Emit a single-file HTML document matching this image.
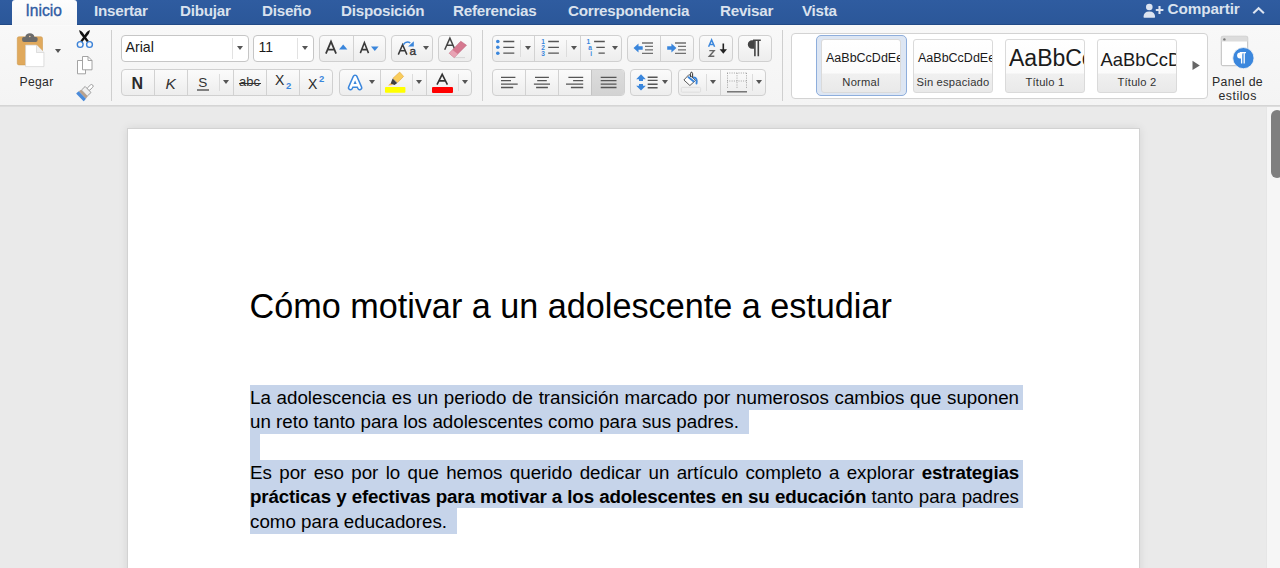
<!DOCTYPE html>
<html><head><meta charset="utf-8">
<style>
*{margin:0;padding:0;box-sizing:border-box}
html,body{width:1280px;height:568px;overflow:hidden;background:#eaeaea;font-family:"Liberation Sans",sans-serif;position:relative}
.a{position:absolute}
#tabbar{left:0;top:0;width:1280px;height:25px;background:linear-gradient(#2f5ca0,#2b5799);border-bottom:1px solid #224a86}
.tab{position:absolute;top:2px;font-size:15.2px;letter-spacing:-0.25px;font-weight:bold;color:#dae2ee;white-space:nowrap;line-height:18px}
#inicio{left:12px;top:0;width:65px;height:27px;background:linear-gradient(#fdfdfd,#f6f6f6);border-radius:3px 3px 0 0}
#inicio span{position:absolute;left:13.5px;top:1.5px;font-size:15.6px;letter-spacing:0px;font-weight:normal;color:#2f5ba3;line-height:18px;-webkit-text-stroke:0.35px #2f5ba3}
#ribbon{left:0;top:25px;width:1280px;height:81px;background:linear-gradient(#f8f8f8,#f4f4f4);border-top:1px solid #fafafa;border-bottom:1px solid #d5d5d5;box-shadow:0 1px 0 #dddddd}
.vsep{position:absolute;width:1px;background:#cfcfcf}
.btn{position:absolute;border:1px solid #d0d0d0;border-radius:4px;background:linear-gradient(#fbfbfb,#ededed)}
.div{position:absolute;top:0;bottom:0;width:1px;background:#d2d2d2}
.isep{position:absolute;top:4px;bottom:4px;width:1px;background:#dcdcdc}
.dd{position:absolute;width:0;height:0;border-left:4px solid transparent;border-right:4px solid transparent;border-top:5px solid #555}
.lbl{position:absolute;font-size:12px;color:#2a2a2a;white-space:nowrap;line-height:14px}
#canvas{left:0;top:107px;width:1280px;height:461px;background:#eaeaea}
#page{left:127px;top:128px;width:1013px;height:460px;background:#fff;border:1px solid #d2d2d2;box-shadow:0 0 9px rgba(0,0,0,0.09)}
#track{left:1266px;top:107px;width:14px;height:461px;background:#f6f6f6;border-left:1px solid #e6e6e6}
#thumb{left:1270.5px;top:110px;width:12px;height:68px;background:#7f7f7f;border-radius:6px}
.hl{position:absolute;background:#c6d4ea}
.line{position:absolute;left:250px;width:769px;font-size:18.75px;color:#000;white-space:nowrap;line-height:22px}
.j{text-align:justify;text-align-last:justify;white-space:normal}
.card{position:absolute;top:39px;width:80px;height:54px;border:1px solid #dadada;border-radius:3px;background:linear-gradient(#fff 0,#fbfbfb 33px,#f0f0f0 34px,#e9e9e9 100%);overflow:hidden}
.smp{position:absolute;left:4px;white-space:nowrap;color:#1a1a1a;line-height:1.15}
.cl{position:absolute;left:0;width:100%;top:36px;text-align:center;font-size:11.2px;letter-spacing:0.2px;color:#333;line-height:13px}
b{letter-spacing:-0.16px}
</style></head><body>
<div id="tabbar" class="a"></div>
<div id="inicio" class="a"><span>Inicio</span></div>
<div class="tab" style="left:94px">Insertar</div>
<div class="tab" style="left:180px">Dibujar</div>
<div class="tab" style="left:262px">Diseño</div>
<div class="tab" style="left:341px">Disposición</div>
<div class="tab" style="left:453px">Referencias</div>
<div class="tab" style="left:568px">Correspondencia</div>
<div class="tab" style="left:720px">Revisar</div>
<div class="tab" style="left:802px">Vista</div>
<div class="tab" style="left:1167.5px;font-size:15.3px;letter-spacing:-0.1px;top:-0.5px">Compartir</div>

<div id="ribbon" class="a"></div>

<!-- ===== RIBBON ===== -->
<!-- clipboard -->
<svg class="a" style="left:14px;top:30px" width="34" height="40" viewBox="0 0 34 40">
  <rect x="3.3" y="6.8" width="25.2" height="28.1" rx="1.6" fill="#e0a95c" stroke="#cf9a4f" stroke-width="0.6"/>
  <path d="M11.3 6.9 a4.6 4.2 0 0 1 9.1 0 h1.6 a1.6 1.6 0 0 1 1.6 1.6 v1.6 a2 2 0 0 1 -2 2 h-11.5 a2 2 0 0 1 -2 -2 v-1.6 a1.6 1.6 0 0 1 1.6 -1.6z" fill="#6b6b6b"/>
  <circle cx="15.8" cy="6.5" r="0.8" fill="#f3cfa8"/>
  <path d="M11.6 15.1 h10.9 l7.4 7.4 v14.1 h-18.3z" fill="#fff" stroke="#d2d2d2" stroke-width="0.7"/>
  <path d="M22.5 15.1 v7.4 h7.4" fill="#f0f0f0" stroke="#d2d2d2" stroke-width="0.7"/>
</svg>
<div class="dd" style="left:55px;top:49px;border-left-width:3px;border-right-width:3px;border-top-width:4px"></div>
<div class="lbl" style="left:19.5px;top:74.5px;font-size:12.2px;letter-spacing:0.3px;color:#2a2a2a">Pegar</div>
<!-- scissors -->
<svg class="a" style="left:74px;top:28px" width="22" height="22" viewBox="0 0 22 22">
  <path d="M5.2 2 Q7.8 3.3 8.7 4.6 L14.8 13 L13 14.3 L6.4 5.9 Q5.3 4.2 5.2 2z" fill="#111"/>
  <path d="M15.9 2 Q13.3 3.3 12.4 4.6 L6.3 13 L8.1 14.3 L14.7 5.9 Q15.8 4.2 15.9 2z" fill="#111"/>
  <circle cx="6.2" cy="16.5" r="2.9" fill="none" stroke="#3b82d8" stroke-width="1.4"/>
  <circle cx="15.5" cy="16.5" r="2.9" fill="none" stroke="#3b82d8" stroke-width="1.4"/>
</svg>
<!-- copy -->
<svg class="a" style="left:74px;top:54px" width="22" height="22" viewBox="0 0 22 22">
  <path d="M3.5 6.5 h8 v13.3 h-8z" fill="#fff" stroke="#9a9a9a" stroke-width="0.9"/>
  <path d="M8.5 2.5 h5.5 l4 4 v9.3 h-9.5z" fill="#fff" stroke="#9a9a9a" stroke-width="0.9"/>
  <path d="M14 2.5 v4 h4" fill="none" stroke="#9a9a9a" stroke-width="0.9"/>
</svg>
<!-- brush -->
<svg class="a" style="left:73.5px;top:79.5px" width="24" height="22" viewBox="0 0 24 22">
  <g transform="rotate(46 12 11.5)">
    <rect x="10.4" y="2.2" width="3.2" height="7" rx="1.6" fill="#fff" stroke="#8d8d8d" stroke-width="0.8"/>
    <path d="M7.8 8.6 h8.4 v5.2 h-8.4z" fill="#efefef" stroke="#8d8d8d" stroke-width="0.8"/>
    <path d="M7.4 13.8 h9.2 l0.6 2.8 h-10.4z" fill="#b9a18c"/>
    <path d="M6.8 16.6 h10.4 l0.3 2.6 q0.1 0.9 -0.8 0.9 h-9.4 q-0.9 0 -0.8 -0.9z" fill="#4a8ad9"/>
  </g>
</svg>
<div class="vsep" style="left:111px;top:30px;height:71px"></div>

<!-- font name / size -->
<div class="a" style="left:121px;top:35px;width:128px;height:27px;background:#fff;border:1px solid #c6c6c6;border-radius:4px"></div>
<div class="a" style="left:232px;top:38px;width:1px;height:21px;background:#e2e2e2"></div>
<div class="dd" style="left:237px;top:46px;border-left-width:3px;border-right-width:3px;border-top-width:4px"></div>
<div class="lbl" style="left:125.5px;top:40px;font-size:14.2px;color:#1a1a1a;line-height:15px">Arial</div>
<div class="a" style="left:253px;top:35px;width:61px;height:27px;background:#fff;border:1px solid #c6c6c6;border-radius:4px"></div>
<div class="a" style="left:297px;top:38px;width:1px;height:21px;background:#e2e2e2"></div>
<div class="dd" style="left:302px;top:46px;border-left-width:3px;border-right-width:3px;border-top-width:4px"></div>
<div class="lbl" style="left:258.5px;top:40px;font-size:14px;color:#1a1a1a;line-height:15px">11</div>

<!-- grow/shrink -->
<div class="btn" style="left:319px;top:35px;width:67px;height:27px"><div class="div" style="left:32.5px"></div></div>
<svg class="a" style="left:319px;top:35px" width="66" height="27"><path d="M6.9 18.6 L12 6.6 L17.1 18.6 M8.6 14.5 H15.4" fill="none" stroke="#393939" stroke-width="1.75"/><path d="M41.3 18.1 L45.4 7.7 L49.5 18.1 M42.7 14.6 H48.1" fill="none" stroke="#393939" stroke-width="1.55"/></svg>
<svg class="a" style="left:339px;top:44px" width="9" height="6"><path d="M0 5.5 L4.2 0.5 L8.4 5.5z" fill="#3a86dc"/></svg>

<svg class="a" style="left:371px;top:46px" width="9" height="6"><path d="M0 0.5 L7.6 0.5 L3.8 5z" fill="#3a86dc"/></svg>
<!-- change case -->
<div class="btn" style="left:391px;top:35px;width:42px;height:27px"></div>
<svg class="a" style="left:391px;top:35px" width="42" height="27" viewBox="0 0 42 27">
  <path d="M7.3 19.6 L11.6 9.6 L15.9 19.6 M9 15.8 H14.2" fill="none" stroke="#3a3a3a" stroke-width="1.5"/>
  <text x="18.4" y="19.7" font-family="Liberation Sans" font-size="11.8" fill="#333" stroke="#333" stroke-width="0.35">a</text>
  <path d="M12.2 9.8 Q15.2 5.6 19.3 7.9" fill="none" stroke="#3a86dc" stroke-width="1.5"/>
  <path d="M17.1 11.4 L22.8 11.4 L22.8 6.2z" fill="#3a86dc"/>
</svg>
<div class="dd" style="left:422.5px;top:46px;border-left-width:3px;border-right-width:3px;border-top-width:4px"></div>
<!-- clear formatting -->
<div class="btn" style="left:438px;top:35px;width:34px;height:27px"></div>
<svg class="a" style="left:438px;top:35px" width="34" height="27" viewBox="0 0 34 27">
  <path d="M6.7 14.7 L11.9 3.1 L17 14.7 M8.5 10.3 H15.5" fill="none" stroke="#444" stroke-width="1.5"/>
  <path d="M16 22.6 H27" stroke="#d6d6d6" stroke-width="1"/>
  <path d="M22.8 6.2 L28.5 10.2 L16.2 22.6 L11.2 18.3z" fill="#d5788f" stroke="#b85a73" stroke-width="0.5"/>
  <path d="M14.6 14.9 L19.8 19 L16.2 22.6 L11.2 18.3z" fill="#e8a3b4"/>
</svg>

<!-- B I U group -->
<div class="btn" style="left:121px;top:69px;width:212px;height:27px">
  <div class="div" style="left:32px"></div><div class="div" style="left:65px"></div>
  <div class="isep" style="left:97px"></div><div class="div" style="left:111px"></div>
  <div class="div" style="left:144px"></div><div class="div" style="left:177px"></div>
</div>
<div class="lbl" style="left:131.5px;top:74.5px;font-size:16px;font-weight:bold;color:#2a2a2a;line-height:18px">N</div>
<div class="lbl" style="left:165.5px;top:74.5px;font-size:15.5px;font-style:italic;color:#333;line-height:18px">K</div>
<div class="lbl" style="left:198.3px;top:75.3px;font-size:13.6px;color:#333;line-height:16px">S</div>
<div class="a" style="left:197px;top:89.3px;width:11.5px;height:1.3px;background:#808080"></div>
<div class="dd" style="left:223px;top:80px;border-left-width:3px;border-right-width:3px;border-top-width:4px"></div>
<div class="lbl" style="left:239px;top:74px;font-size:13px;color:#333;line-height:15px">abc</div>
<div class="a" style="left:239px;top:82.5px;width:22px;height:1.2px;background:#333"></div>
<div class="lbl" style="left:275px;top:72.3px;font-size:14px;color:#2a2a2a;line-height:16px">X</div>
<div class="lbl" style="left:286px;top:80px;font-size:9.5px;font-weight:bold;color:#3a86dc;line-height:11px">2</div>
<div class="lbl" style="left:308px;top:76.2px;font-size:14px;color:#2a2a2a;line-height:16px">X</div>
<div class="lbl" style="left:319px;top:73px;font-size:9.5px;font-weight:bold;color:#3a86dc;line-height:11px">2</div>

<!-- effects / highlight / color -->
<div class="btn" style="left:339px;top:69px;width:133px;height:27px">
  <div class="div" style="left:39.5px"></div><div class="isep" style="left:71.5px"></div>
  <div class="div" style="left:85.5px"></div><div class="isep" style="left:117.5px"></div>
</div>
<svg class="a" style="left:343px;top:70px" width="24" height="24" viewBox="0 0 24 24">
  <path d="M7.5 17.7 L12.1 7.2 L16.7 17.7 M9 15.2 H15.2" fill="none" stroke="#3a86dc" stroke-width="5.4" stroke-linejoin="round" stroke-linecap="round"/>
  <path d="M7.5 17.7 L12.1 7.2 L16.7 17.7 M9 15.2 H15.2" fill="none" stroke="#fff" stroke-width="2.5" stroke-linejoin="round" stroke-linecap="round"/>
</svg>
<div class="dd" style="left:368.5px;top:80px;border-left-width:3px;border-right-width:3px;border-top-width:4px"></div>
<svg class="a" style="left:343px;top:70px" width="66" height="24" viewBox="0 0 66 24">
  <path d="M50 8.2 L56.7 2.1 L60.6 6.4 L54.6 12.6z" fill="#f9cd5c" stroke="#e0a63c" stroke-width="0.6"/>
  <path d="M49.6 8.6 L54.2 13 L51.6 15 L47.6 13.8z" fill="#3f3f3f"/>
  <path d="M45 15.6 L47.5 13.2 L50.2 15z" fill="#f1b24a"/>
  <rect x="42" y="17" width="20.4" height="5.7" rx="0.8" fill="#ffff00"/>
</svg>
<div class="dd" style="left:415.5px;top:80px;border-left-width:3px;border-right-width:3px;border-top-width:4px"></div>
<svg class="a" style="left:430px;top:70px" width="24" height="18"><path d="M7 14.6 L12.2 4.3 L17.4 14.6 M8.9 10.9 H15.5" fill="none" stroke="#333" stroke-width="1.6"/></svg>
<div class="a" style="left:432px;top:87px;width:20.5px;height:5.7px;background:#ff0000;border-radius:1px"></div>
<div class="dd" style="left:461.5px;top:80px;border-left-width:3px;border-right-width:3px;border-top-width:4px"></div>

<div class="vsep" style="left:482px;top:30px;height:71px"></div>

<!-- lists -->
<div class="btn" style="left:492px;top:35px;width:130px;height:27px">
  <div class="div" style="left:41px"></div><div class="div" style="left:87px"></div>
  <div class="isep" style="left:27px"></div><div class="isep" style="left:73px"></div>
</div>
<svg class="a" style="left:494px;top:38px" width="26" height="20">
  <circle cx="3.8" cy="3.5" r="1.8" fill="#3a86dc"/><circle cx="3.8" cy="9.3" r="1.8" fill="#3a86dc"/><circle cx="3.8" cy="15.2" r="1.8" fill="#3a86dc"/>
  <path d="M9.3 3.5 h11 M9.3 9.3 h11 M9.3 15.2 h11" stroke="#555" stroke-width="1.3"/>
</svg>
<div class="dd" style="left:524.5px;top:46px;border-left-width:3px;border-right-width:3px;border-top-width:4px"></div>
<div class="lbl" style="left:541.3px;top:38.5px;font-size:6.6px;font-weight:bold;color:#3a86dc;line-height:6.1px">1<br>2<br>3</div>
<svg class="a" style="left:546px;top:38px" width="16" height="20"><path d="M2.2 3.5 h10.7 M2.2 9.3 h10.7 M2.2 15.2 h10.7" stroke="#555" stroke-width="1.3"/></svg>
<div class="dd" style="left:570.5px;top:46px;border-left-width:3px;border-right-width:3px;border-top-width:4px"></div>
<div class="lbl" style="left:586.5px;top:38.5px;font-size:6.6px;font-weight:bold;color:#3a86dc;line-height:6.1px">1<br>&nbsp;a<br>&nbsp;&nbsp;i</div>
<svg class="a" style="left:592px;top:38px" width="16" height="20"><path d="M2.1 3.5 h10.7 M4.3 9.3 h8.5 M6.5 15.2 h6.3" stroke="#555" stroke-width="1.3"/></svg>
<div class="dd" style="left:612px;top:46px;border-left-width:3px;border-right-width:3px;border-top-width:4px"></div>

<!-- indent -->
<div class="btn" style="left:627px;top:35px;width:67px;height:27px"><div class="div" style="left:32px"></div></div>
<svg class="a" style="left:632px;top:40px" width="24" height="16">
  <path d="M1.5 8 L6.5 3.5 V6.3 H10.7 V9.7 H6.5 V12.5z" fill="#3a86dc"/>
  <path d="M10 3 h11 M13 6.4 h8 M13 9.9 h8 M10 13.4 h11" stroke="#707070" stroke-width="1.3"/>
</svg>
<svg class="a" style="left:665px;top:40px" width="24" height="16">
  <path d="M11.4 8 L6.4 3.5 V6.3 H2.2 V9.7 H6.4 V12.5z" fill="#3a86dc"/>
  <path d="M10 3 h11 M13 6.4 h8 M13 9.9 h8 M10 13.4 h11" stroke="#707070" stroke-width="1.3"/>
</svg>
<!-- sort -->
<div class="btn" style="left:699px;top:35px;width:34px;height:27px"></div>
<svg class="a" style="left:699px;top:35px" width="34" height="27"><path d="M9.6 11.7 L12.6 4.9 L15.6 11.7 M10.6 9.4 H14.6" fill="none" stroke="#3a86dc" stroke-width="1.45"/><path d="M10.3 15.6 H15.1 L10.3 21.2 H15.3" fill="none" stroke="#666" stroke-width="1.45"/></svg>

<svg class="a" style="left:719px;top:43px" width="9" height="12"><path d="M4.3 0.5 V8" stroke="#222" stroke-width="1.6"/><path d="M0.6 6.3 L4.3 10.8 L8 6.3z" fill="#222"/></svg>
<!-- pilcrow -->
<div class="btn" style="left:738px;top:35px;width:34px;height:27px"></div>
<svg class="a" style="left:746px;top:39px" width="16" height="19" viewBox="0 0 16 19">
  <path d="M9.5 1.3 H6 A4.2 4.2 0 0 0 6 9.7 H8.2 V1.3z" fill="#444"/>
  <path d="M8.9 1.3 V17.2 M12.3 1.3 V17.2 M7 1.3 H14.8" stroke="#444" stroke-width="1.6"/>
</svg>

<!-- align -->
<div class="btn" style="left:492px;top:69px;width:133px;height:27px;overflow:hidden">
  <div class="a" style="left:98px;top:0;width:34px;height:27px;background:linear-gradient(#dcdcdc,#d2d2d2)"></div>
  <div class="div" style="left:32px"></div><div class="div" style="left:65px"></div><div class="div" style="left:98px;background:#c4c4c4"></div>
</div>
<svg class="a" style="left:499px;top:75px" width="20" height="14"><path d="M2 2.3 h14.4 M2 5.6 h10 M2 9.2 h16.7 M2 12.5 h12.2" stroke="#555" stroke-width="1.3"/></svg>
<svg class="a" style="left:532px;top:75px" width="20" height="14"><path d="M3 2.3 h13.9 M5.2 5.6 h9.6 M1.9 9.2 h16.1 M4.1 12.5 h11.8" stroke="#555" stroke-width="1.3"/></svg>
<svg class="a" style="left:565px;top:75px" width="20" height="14"><path d="M3.4 2.3 h14.8 M8.1 5.6 h10.1 M1 9.2 h17.2 M5.9 12.5 h12.3" stroke="#555" stroke-width="1.3"/></svg>
<svg class="a" style="left:599px;top:75px" width="20" height="14"><path d="M1.7 2.3 h15.8 M1.7 5.6 h15.8 M1.7 9.2 h15.8 M1.7 12.5 h15.8" stroke="#555" stroke-width="1.3"/></svg>

<!-- line spacing -->
<div class="btn" style="left:630px;top:69px;width:42px;height:27px"></div>
<svg class="a" style="left:634px;top:72px" width="26" height="22">
  <path d="M7 2.3 L11.8 7.2 H9 V9 H5 V7.2 H2.2z" fill="#3a86dc"/>
  <path d="M7 18.6 L11.8 13.7 H9 V11.9 H5 V13.7 H2.2z" fill="#3a86dc"/>
  <path d="M13.7 5.2 h9.9 M13.7 8.4 h9.9 M13.7 12.3 h9.9 M13.7 15.7 h9.9" stroke="#555" stroke-width="1.4"/>
</svg>
<div class="dd" style="left:662px;top:80px;border-left-width:3px;border-right-width:3px;border-top-width:4px"></div>

<!-- shading / borders -->
<div class="btn" style="left:678px;top:69px;width:88px;height:27px">
  <div class="div" style="left:41px"></div><div class="isep" style="left:27px"></div><div class="isep" style="left:73px"></div>
</div>
<svg class="a" style="left:678px;top:69px" width="26" height="26" viewBox="0 0 26 26">
  <path d="M5.9 11 L11 5.5 L17.6 11.4 L11.9 16.5z" fill="#fff" stroke="#4a4a4a" stroke-width="0.9"/>
  <path d="M10 7.7 L16.1 12.8" stroke="#3a86dc" stroke-width="2"/>
  <path d="M12.7 8 Q12.1 3 13.6 3 Q15 3 14.7 8.6" fill="none" stroke="#333" stroke-width="1"/>
  <path d="M15.8 8.5 Q19.6 8.6 18.5 14.5" fill="none" stroke="#3a86dc" stroke-width="1.9" stroke-linecap="round"/>
  <rect x="3.3" y="18.4" width="19.3" height="4.8" rx="1" fill="none" stroke="#dcdcdc" stroke-width="0.9"/>
</svg>
<div class="dd" style="left:710px;top:80px;border-left-width:3px;border-right-width:3px;border-top-width:4px"></div>
<svg class="a" style="left:725px;top:71px" width="24" height="23">
  <path d="M2.5 2 V18 M12 2 V18 M21.5 2 V18 M2 2 H22 M2 10 H22" stroke="#9a9a9a" stroke-width="0.9" stroke-dasharray="1 1.3"/>
  <path d="M2 20.8 H22" stroke="#6a6a6a" stroke-width="1.4"/>
</svg>
<div class="dd" style="left:756px;top:80px;border-left-width:3px;border-right-width:3px;border-top-width:4px"></div>

<div class="vsep" style="left:782px;top:30px;height:71px"></div>

<!-- styles gallery -->
<div class="a" style="left:791px;top:33px;width:417px;height:66px;background:#fff;border:1px solid #d3d3d3;border-radius:4px"></div>
<div class="a" style="left:816px;top:35px;width:91px;height:61px;background:#dde6f3;border:1px solid #8eaedc;border-radius:5px"></div>
<div class="card" style="left:821px"><div class="smp" style="font-size:12.5px;top:10.5px">AaBbCcDdEe</div><div class="cl">Normal</div></div>
<div class="card" style="left:913px"><div class="smp" style="font-size:12.5px;top:10.5px">AaBbCcDdEe</div><div class="cl">Sin espaciado</div></div>
<div class="card" style="left:1005px"><div class="smp" style="font-size:23px;top:5px;left:3px">AaBbCc</div><div class="cl">Título 1</div></div>
<div class="card" style="left:1097px"><div class="smp" style="font-size:18.4px;top:8.5px;left:2.5px">AaBbCcDd</div><div class="cl">Título 2</div></div>
<svg class="a" style="left:1191px;top:60px" width="10" height="11"><path d="M1.5 0.7 L8.8 5.4 L1.5 10.1z" fill="#666"/></svg>

<!-- panel de estilos -->
<svg class="a" style="left:1219px;top:34px" width="36" height="36" viewBox="0 0 36 36">
  <rect x="2.3" y="2.3" width="26.4" height="29.4" rx="1.5" fill="#fff" stroke="#b5b5b5" stroke-width="0.9"/>
  <path d="M2.3 3.8 a1.5 1.5 0 0 1 1.5 -1.5 h23.4 a1.5 1.5 0 0 1 1.5 1.5 v3.6 h-26.4z" fill="#dcdcdc"/>
  <circle cx="5.4" cy="5.4" r="1.2" fill="#777"/>
  <circle cx="24.4" cy="24.1" r="10.6" fill="#3b87dd" stroke="#f4f4f4" stroke-width="0.8"/>
  <path d="M23.6 18.6 h-2.6 a2.9 2.9 0 0 0 0 5.8 h1.2z" fill="#fff"/>
  <path d="M22.6 18.6 v10.8 M25.2 18.6 v10.8 M21 18.6 h6" stroke="#fff" stroke-width="1.3"/>
</svg>
<div class="lbl" style="left:1212px;top:75px;font-size:12.3px;letter-spacing:0.3px;color:#2a2a2a;line-height:14px">Panel de</div>
<div class="lbl" style="left:1218.5px;top:88.5px;font-size:12.3px;letter-spacing:0.5px;color:#2a2a2a;line-height:14px">estilos</div>

<!-- compartir icon -->
<svg class="a" style="left:1142px;top:2px" width="24" height="18" viewBox="0 0 24 18">
  <circle cx="7.3" cy="5" r="3.3" fill="#dde4f0"/>
  <path d="M1.5 15 q0 -5.6 5.8 -5.6 q5.8 0 5.8 5.6 q0 0.8 -0.8 0.8 h-10 q-0.8 0 -0.8 -0.8z" fill="#dde4f0"/>
  <path d="M17.5 4 V12 M13.8 8 H21.4" stroke="#dde4f0" stroke-width="2.1"/>
</svg>
<svg class="a" style="left:1251px;top:5px" width="15" height="11"><path d="M2.3 8.2 L7.6 3.3 L12.9 8.2" fill="none" stroke="#dde4f0" stroke-width="2.1"/></svg>

<div id="canvas" class="a"></div>
<div id="page" class="a"></div>
<div id="track" class="a"></div>
<div id="thumb" class="a"></div>

<!-- document -->
<div class="a" style="left:249.5px;top:286px;font-size:34.2px;line-height:40px;color:#000;white-space:nowrap">Cómo motivar a un adolescente a estudiar</div>

<div class="hl" style="left:250px;top:385px;width:773px;height:25px"></div>
<div class="hl" style="left:250px;top:410px;width:499px;height:24px"></div>
<div class="hl" style="left:250px;top:434px;width:10px;height:26px"></div>
<div class="hl" style="left:250px;top:460px;width:773px;height:48px"></div>
<div class="hl" style="left:250px;top:508px;width:207px;height:26px"></div>

<div class="line j" style="top:387px">La adolescencia es un periodo de transición marcado por numerosos cambios que suponen</div>
<div class="line" style="top:411px">un reto tanto para los adolescentes como para sus padres.</div>
<div class="line j" style="top:462px">Es por eso por lo que hemos querido dedicar un artículo completo a explorar <b>estrategias</b></div>
<div class="line j" style="top:486px"><b>prácticas y efectivas para motivar a los adolescentes en su educación</b> tanto para padres</div>
<div class="line" style="top:511px">como para educadores.</div>

</body></html>
